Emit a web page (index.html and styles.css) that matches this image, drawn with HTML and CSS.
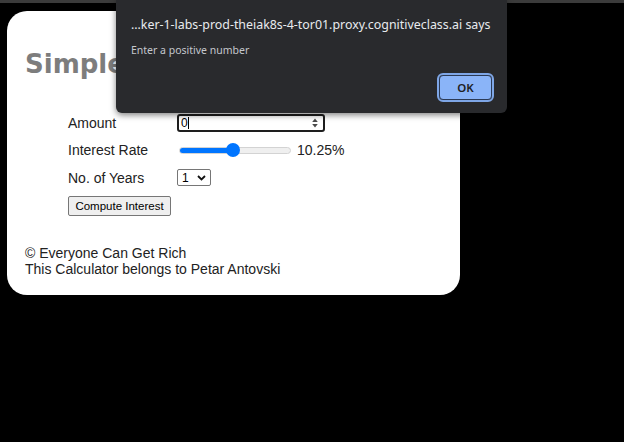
FILE: index.html
```html
<!DOCTYPE html>
<html lang="en">
<head>
<meta charset="utf-8">
<title>Simple Interest Calculator</title>
<link rel="stylesheet" href="styles.css">
</head>
<body>
  <div class="topbar"></div>
  <main class="card">
    <h1 class="title">Simple Interest Calculator</h1>
    <div class="form">
      <div class="row">
        <span class="label">Amount</span>
        <div class="numbox">
          <span class="numtext">0</span><span class="caret"></span>
          <svg class="spin" width="6" height="10" viewBox="0 0 6 10"><path d="M3 0.5 L5.8 4 L0.2 4 Z M3 9.5 L5.8 6 L0.2 6 Z" fill="#4a4a4a"/></svg>
        </div>
      </div>
      <div class="row">
        <span class="label">Interest Rate</span>
        <div class="slider">
          <div class="track"><div class="fill" style="width: 54px"></div></div>
          <div class="thumb" style="left: 54px"></div>
        </div>
        <span class="rate">10.25%</span>
      </div>
      <div class="row">
        <span class="label">No. of Years</span>
        <div class="select">
          <span class="seltext">1</span>
          <svg class="chev" width="9" height="6" viewBox="0 0 9 6"><path d="M1 1 L4.5 4.5 L8 1" fill="none" stroke="#111" stroke-width="1.8"/></svg>
        </div>
      </div>
    </div>
    <button class="compute">Compute Interest</button>
    <footer class="footer">
      <div>© Everyone Can Get Rich</div>
      <div>This Calculator belongs to Petar Antovski</div>
    </footer>
  </main>
  <div class="dialog">
    <div class="dlg-title">…ker-1-labs-prod-theiak8s-4-tor01.proxy.cognitiveclass.ai says</div>
    <div class="dlg-msg">Enter a positive number</div>
    <div class="dlg-actions"><button class="ok">OK</button></div>
  </div>
</body>
</html>
```
FILE: styles.css
```css
html, body {
  margin: 0;
  padding: 0;
  background: #000;
  width: 624px;
  height: 442px;
  overflow: hidden;
}

.topbar {
  height: 3px;
  background: #3b3b3b;
}

.card {
  margin: 8px 0 0 7px;
  width: 453px;
  height: 284px;
  box-sizing: border-box;
  background: #fff;
  border-radius: 20px;
  padding: 0 0 0 18px;
  font-family: "Liberation Sans", Arial, sans-serif;
  color: #222;
  display: flex;
  flex-direction: column;
  align-items: flex-start;
}

.title {
  margin: 38px 0 0 0;
  font-family: "DejaVu Sans", Verdana, sans-serif;
  font-weight: bold;
  font-size: 26px;
  line-height: 30px;
  color: #7d7d7d;
  white-space: nowrap;
  overflow: hidden;
  width: 91px;
}

.form {
  margin: 30px 0 0 43px;
  display: flex;
  flex-direction: column;
}

.row {
  display: flex;
  align-items: center;
  height: 27.5px;
}

.label {
  width: 109px;
  font-size: 14px;
  line-height: 16px;
}

.numbox {
  width: 148px;
  height: 18px;
  box-sizing: border-box;
  border: 2px solid #1e1e1e;
  border-radius: 3px;
  display: flex;
  align-items: center;
  padding: 0 5px 0 2px;
  font-size: 12px;
  color: #000;
}

.numtext {
  line-height: 14px;
}

.caret {
  width: 1px;
  height: 12px;
  background: #000;
}

.spin {
  margin-left: auto;
}

.slider {
  position: relative;
  width: 112px;
  height: 14px;
  margin-left: 2px;
  display: flex;
  align-items: center;
}

.track {
  width: 100%;
  height: 7px;
  box-sizing: border-box;
  background: #efefef;
  border: 1px solid #d3d3d3;
  border-radius: 4px;
  display: flex;
  overflow: hidden;
}

.fill {
  background: #0075ff;
  height: 100%;
}

.thumb {
  position: absolute;
  top: 0;
  width: 14px;
  height: 14px;
  margin-left: -7px;
  border-radius: 50%;
  background: #0075ff;
}

.rate {
  margin-left: 6px;
  font-size: 14px;
  line-height: 16px;
}

.select {
  width: 34px;
  height: 17px;
  box-sizing: border-box;
  border: 1px solid #767676;
  border-radius: 2px;
  display: flex;
  align-items: center;
  padding: 0 4px;
  font-size: 12px;
  color: #000;
}

.chev {
  margin-left: auto;
}

.compute {
  margin: 4px 0 0 43px;
  width: 103px;
  height: 20px;
  padding: 0;
  box-sizing: border-box;
  border: 1px solid #767676;
  border-radius: 2px;
  background: #efefef;
  font-family: "Liberation Sans", Arial, sans-serif;
  font-size: 11.5px;
  color: #000;
}

.footer {
  margin-top: 29px;
  font-size: 14px;
  line-height: 16px;
  color: #222;
}

.dialog {
  position: absolute;
  left: 116px;
  top: 0;
  width: 391px;
  height: 113px;
  box-sizing: border-box;
  background: #292a2d;
  border-radius: 0 0 6px 6px;
  box-shadow: 0 2px 6px rgba(0, 0, 0, 0.5);
  padding: 16px 13px 0 15px;
  font-family: "Noto Sans", "Open Sans", sans-serif;
  display: flex;
  flex-direction: column;
}

.dlg-title {
  font-size: 12.4px;
  line-height: 18px;
  color: #e8eaed;
  white-space: nowrap;
}

.dlg-msg {
  margin-top: 9px;
  font-size: 10.5px;
  line-height: 14px;
  color: #c4c7cc;
}

.dlg-actions {
  margin-top: 16px;
  display: flex;
  justify-content: flex-end;
}

.ok {
  width: 53px;
  height: 25px;
  margin: 2px;
  box-sizing: border-box;
  background: #8ab4f8;
  border: 1.5px solid #2b3a55;
  outline: 2px solid #7ea6e6;
  border-radius: 4px;
  font-family: "Noto Sans", "Open Sans", sans-serif;
  font-size: 11.5px;
  font-weight: 600;
  color: #202124;
  padding: 0;
}
```
